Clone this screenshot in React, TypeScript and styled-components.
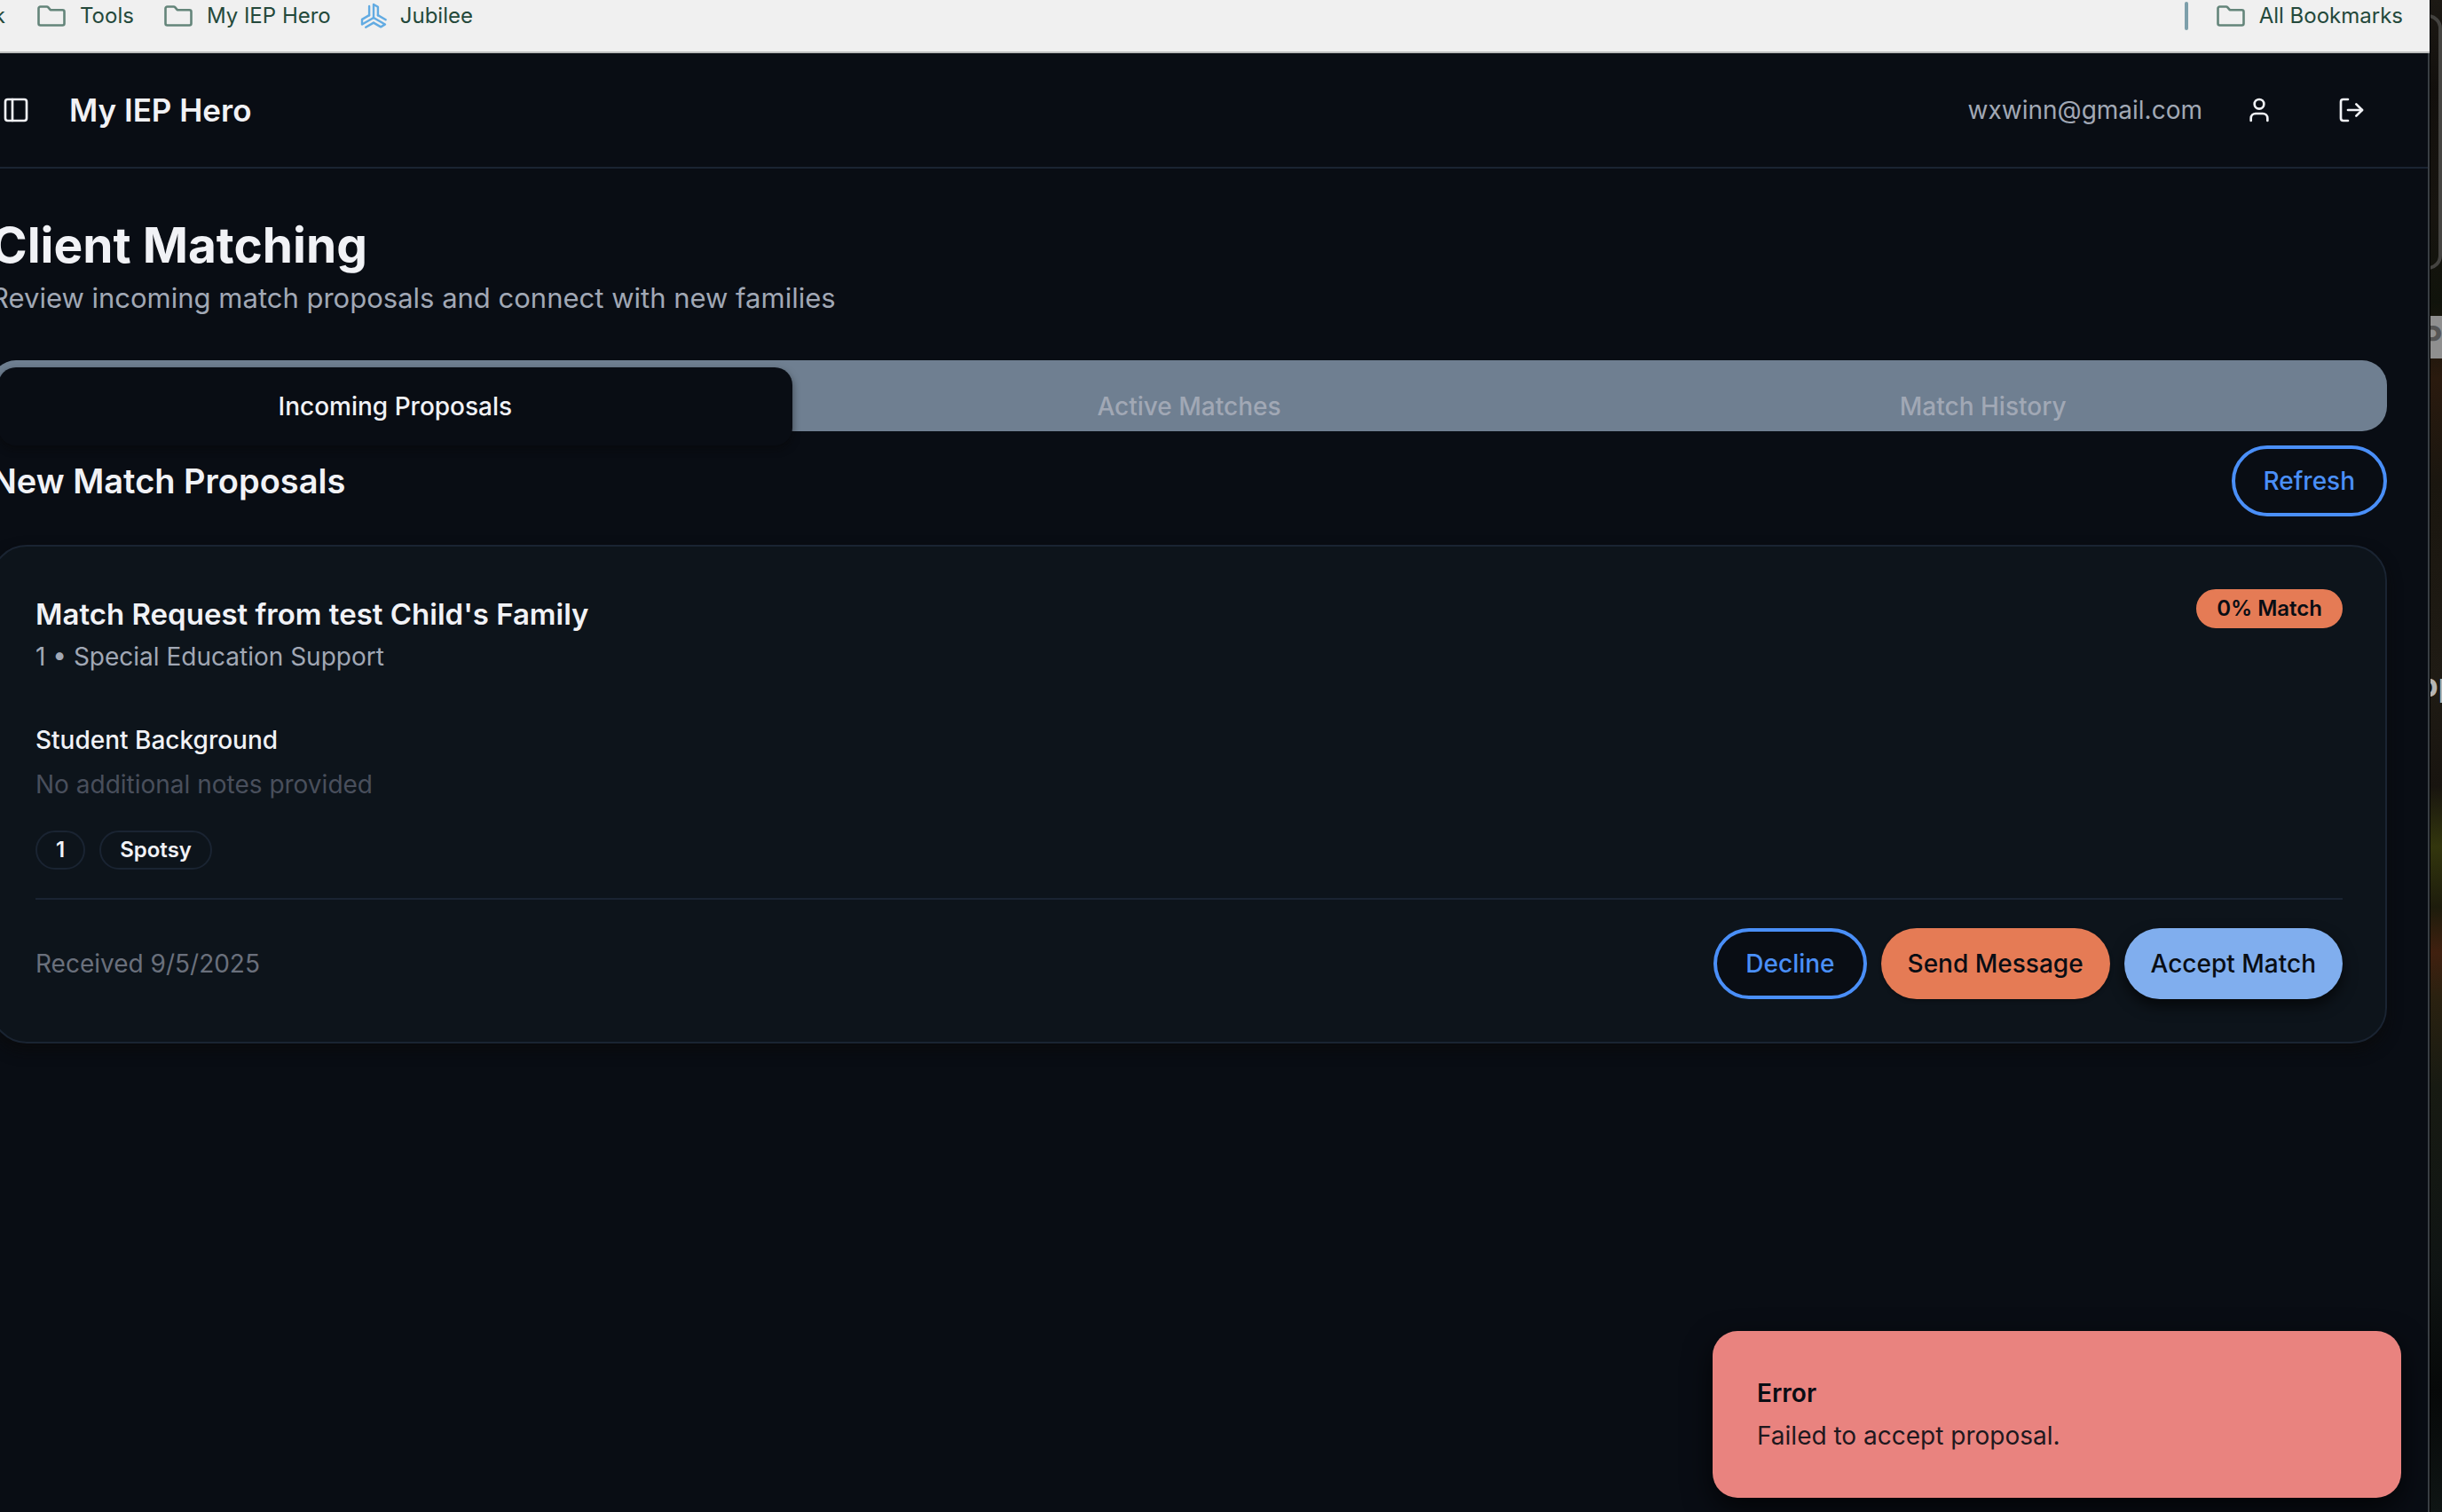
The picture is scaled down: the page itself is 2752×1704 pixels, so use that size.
import React from "react";
import styled, { createGlobalStyle, css } from "styled-components";
import { LogOut, PanelLeft, User } from "lucide-react";

const color = {
  page: "#090d14",
  card: "#0d141b",
  line: "#1a2432",
  text: "#f1f2f6",
  muted: "#a1a8b5",
  faint: "#6a707c",
  ghost: "#494f5c",
  slate: "#6f7f91",
  blue: "#4a8ff8",
  sky: "#80aeee",
  orange: "#e57b55",
  danger: "#e9837f",
  bookmark: "#24493b",
  folder: "#64857a",
};

const GlobalStyle = createGlobalStyle`
  *, *::before, *::after { box-sizing: border-box; }
  body {
    margin: 0;
    overflow: hidden;
    background: #000;
    font-family: Inter, "Liberation Sans", sans-serif;
    font-size: 28px;
    line-height: 40px;
  }
  h1, h2, h3, h4, p { margin: 0; }
  button { font: inherit; cursor: pointer; }
`;

const Screen = styled.div`
  display: grid;
  grid-template-columns: minmax(0, 1fr) 13px;
  column-gap: 1px;
  height: 100vh;
`;

const BrowserWindow = styled.div`
  position: relative;
  display: flex;
  flex-direction: column;
  min-width: 0;
  overflow: hidden;
`;

/* Bookmarks bar */

const BookmarksBar = styled.nav`
  display: flex;
  flex: none;
  align-items: flex-start;
  justify-content: space-between;
  height: 60px;
  padding-right: 30px;
  border-bottom: 2px solid #bcbdbd;
  background: #f0f0f0;
`;

const BookmarkGroup = styled.div<{ $gap: number }>`
  display: flex;
  align-items: center;
  gap: ${(p) => p.$gap}px;
  height: 36px;
`;

const Bookmark = styled.a<{ $clipped?: boolean }>`
  display: flex;
  align-items: center;
  gap: 16px;
  color: ${color.bookmark};
  font-size: 24px;
  line-height: 32px;
  text-decoration: none;
  white-space: nowrap;
  ${(p) =>
    p.$clipped &&
    css`
      justify-content: flex-end;
      width: 8px;
      padding-right: 2px;
    `}
`;

const BarDivider = styled.span`
  width: 4px;
  height: 32px;
  border-radius: 2px;
  background: #7d9faa;
`;

/* Application */

const AppFrame = styled.div`
  display: flex;
  flex: 1;
  flex-direction: column;
  min-height: 0;
  border-right: 2px solid #3a3f44;
  background: ${color.page};
  color: ${color.text};
`;

const Header = styled.header`
  display: flex;
  align-items: center;
  justify-content: space-between;
  height: 130px;
  padding-right: 46px;
  border-bottom: 2px solid ${color.line};
`;

const HeaderSide = styled.div<{ $gap: number }>`
  display: flex;
  align-items: center;
  gap: ${(p) => p.$gap}px;
`;

const IconButton = styled.button<{ $width: number }>`
  display: flex;
  align-items: center;
  justify-content: center;
  width: ${(p) => p.$width}px;
  height: 80px;
  padding: 0;
  border: 0;
  background: none;
  color: ${color.text};
`;

const Brand = styled.span`
  font-size: 35px;
  font-weight: 600;
`;

const Email = styled.span`
  color: ${color.muted};
`;

const Main = styled.main`
  margin-left: -10px;
  padding: 48px 46px 0 0;
`;

const PageTitle = styled.h1`
  font-size: 55px;
  font-weight: 700;
  line-height: 76px;
`;

const PageLead = styled.p`
  color: ${color.muted};
  font-size: 31px;
  line-height: 44px;
`;

const TabList = styled.div`
  display: grid;
  grid-template-columns: repeat(3, 1fr);
  height: 80px;
  margin-top: 48px;
  padding: 8px;
  border-radius: 28px;
  background: ${color.slate};
`;

const Tab = styled.button<{ $active?: boolean }>`
  height: 88px;
  border: 0;
  border-radius: 20px;
  background: none;
  color: ${color.muted};
  font-weight: 500;
  ${(p) =>
    p.$active &&
    css`
      background: ${color.page};
      color: ${color.text};
      box-shadow: 0 4px 8px rgba(8, 8, 8, 0.5);
    `}
`;

const SectionHead = styled.div`
  display: flex;
  align-items: center;
  justify-content: space-between;
  margin: 16px 0 32px;
`;

const SectionTitle = styled.h2`
  font-size: 38px;
  font-weight: 600;
`;

const PillButton = styled.button<{ $kind: "outline" | "orange" | "sky" }>`
  height: 80px;
  padding: 0 30px;
  border: 0;
  border-radius: 40px;
  color: ${color.page};
  font-weight: 500;
  white-space: nowrap;
  ${(p) =>
    p.$kind === "outline" &&
    css`
      padding: 0 32px;
      border: 4px solid ${color.blue};
      background: ${color.page};
      color: ${color.blue};
    `}
  ${(p) =>
    p.$kind === "orange" &&
    css`
      background: ${color.orange};
      box-shadow: 0 2px 4px rgba(0, 0, 0, 0.3);
    `}
  ${(p) =>
    p.$kind === "sky" &&
    css`
      background: ${color.sky};
      box-shadow: 0 8px 16px rgba(0, 0, 0, 0.6);
    `}
`;

const Card = styled.article`
  padding: 48px;
  border: 2px solid ${color.line};
  border-radius: 40px;
  background: ${color.card};
  box-shadow: 0 8px 16px rgba(10, 10, 10, 0.7);
`;

const CardHead = styled.div`
  display: flex;
  align-items: flex-start;
  justify-content: space-between;
  margin-bottom: 54px;
`;

const CardTitle = styled.h3`
  font-size: 33px;
  font-weight: 600;
  line-height: 56px;
`;

const CardMeta = styled.p`
  color: ${color.muted};
`;

const Badge = styled.span<{ $filled?: boolean }>`
  padding: 4px 21px;
  border: 2px solid ${(p) => (p.$filled ? color.orange : color.line)};
  border-radius: 22px;
  background: ${(p) => (p.$filled ? color.orange : "transparent")};
  color: ${(p) => (p.$filled ? color.page : color.text)};
  font-size: 24px;
  font-weight: 600;
  line-height: 32px;
`;

const BlockTitle = styled.h4`
  font-weight: 500;
`;

const Notes = styled.p`
  margin-top: 10px;
  color: ${color.ghost};
`;

const Chips = styled.div`
  display: flex;
  gap: 16px;
  margin: 32px 0;
`;

const CardFoot = styled.div`
  display: flex;
  align-items: center;
  justify-content: space-between;
  padding-top: 32px;
  border-top: 2px solid ${color.line};
`;

const Received = styled.span`
  color: ${color.faint};
`;

const Actions = styled.div`
  display: flex;
  gap: 16px;
`;

const Toast = styled.div`
  position: absolute;
  right: 32px;
  bottom: 16px;
  width: 776px;
  padding: 50px;
  border-radius: 28px;
  background: ${color.danger};
  color: ${color.page};
  box-shadow: 0 12px 32px rgba(0, 0, 0, 0.7);
`;

const ToastTitle = styled.p`
  font-weight: 600;
`;

const ToastText = styled.p`
  margin-top: 8px;
  opacity: 0.9;
`;

/* Strip of the desktop behind the window */

const Desktop = styled.aside`
  display: flex;
  flex-direction: column;
  overflow: hidden;
  background: linear-gradient(
    #1c1914 0%,
    #120f0c 6%,
    #17140f 14%,
    #10130b 20%,
    #2a1a0e 25%,
    #1a160f 32%,
    #1f1b14 45%,
    #18140f 52%,
    #33360d 56%,
    #1d1c0c 60%,
    #40200f 63%,
    #2a2110 66%,
    #171a12 72%,
    #0f1413 84%,
    #060808 92%,
    #0f1514 100%
  );
`;

const DesktopFrame = styled.div`
  height: 288px;
  margin: 16px 0 52px -32px;
  border: 4px solid #444340;
  border-radius: 16px;
`;

const DesktopLabel = styled.div<{ $band?: boolean }>`
  height: 48px;
  margin-bottom: 344px;
  background: ${(p) => (p.$band ? "#8f8f8f" : "none")};
  color: ${(p) => (p.$band ? "#555" : "#b5b5b5")};
  font-size: 36px;
  font-weight: 700;
  line-height: 48px;
  text-indent: ${(p) => (p.$band ? -10 : -14)}px;
  white-space: nowrap;
`;

function FolderIcon() {
  return (
    <svg width="32" height="24" viewBox="0 0 32 24" fill="none" aria-hidden="true">
      <path
        d="M1.5 3.5a2 2 0 0 1 2-2h7.2a2 2 0 0 1 1.5.7l2.6 3h13.7a2 2 0 0 1 2 2v13.3a2 2 0 0 1-2 2h-25a2 2 0 0 1-2-2z"
        stroke={color.folder}
        strokeWidth="2.6"
        strokeLinejoin="round"
      />
    </svg>
  );
}

const jubileeArm = "M0 0V-15L4.9 -12.2V-2.8M-4.9 -13V-2.8";

function JubileeIcon() {
  return (
    <svg width="28" height="28" viewBox="-14 -16 28 28" fill="none" overflow="visible" aria-hidden="true">
      <g stroke="#62abe2" strokeWidth="2.4" strokeLinejoin="round" strokeLinecap="round">
        <path d={jubileeArm} />
        <path d={jubileeArm} transform="rotate(120)" />
        <path d={jubileeArm} transform="rotate(240)" />
      </g>
    </svg>
  );
}

export default function App() {
  return (
    <>
      <GlobalStyle />
      <Screen>
        <BrowserWindow>
          <BookmarksBar aria-label="Bookmarks">
            <BookmarkGroup $gap={34}>
              <Bookmark href="#" $clipped>
                k
              </Bookmark>
              <Bookmark href="#tools">
                <FolderIcon />
                Tools
              </Bookmark>
              <Bookmark href="#my-iep-hero">
                <FolderIcon />
                My IEP Hero
              </Bookmark>
              <Bookmark href="#jubilee">
                <JubileeIcon />
                Jubilee
              </Bookmark>
            </BookmarkGroup>
            <BookmarkGroup $gap={32}>
              <BarDivider />
              <Bookmark href="#all">
                <FolderIcon />
                All Bookmarks
              </Bookmark>
            </BookmarkGroup>
          </BookmarksBar>

          <AppFrame>
            <Header>
              <HeaderSide $gap={42}>
                <IconButton $width={36} aria-label="Toggle sidebar">
                  <PanelLeft size={32} />
                </IconButton>
                <Brand>My IEP Hero</Brand>
              </HeaderSide>
              <HeaderSide $gap={24}>
                <Email>wxwinn@gmail.com</Email>
                <IconButton $width={80} aria-label="Profile">
                  <User size={32} />
                </IconButton>
                <IconButton $width={80} aria-label="Sign out">
                  <LogOut size={32} />
                </IconButton>
              </HeaderSide>
            </Header>

            <Main>
              <PageTitle>Client Matching</PageTitle>
              <PageLead>Review incoming match proposals and connect with new families</PageLead>

              <TabList role="tablist">
                <Tab role="tab" aria-selected="true" $active>
                  Incoming Proposals
                </Tab>
                <Tab role="tab" aria-selected="false">
                  Active Matches
                </Tab>
                <Tab role="tab" aria-selected="false">
                  Match History
                </Tab>
              </TabList>

              <SectionHead>
                <SectionTitle>New Match Proposals</SectionTitle>
                <PillButton $kind="outline">Refresh</PillButton>
              </SectionHead>

              <Card>
                <CardHead>
                  <div>
                    <CardTitle>Match Request from test Child's Family</CardTitle>
                    <CardMeta>1 • Special Education Support</CardMeta>
                  </div>
                  <Badge $filled>0% Match</Badge>
                </CardHead>
                <BlockTitle>Student Background</BlockTitle>
                <Notes>No additional notes provided</Notes>
                <Chips>
                  <Badge>1</Badge>
                  <Badge>Spotsy</Badge>
                </Chips>
                <CardFoot>
                  <Received>Received 9/5/2025</Received>
                  <Actions>
                    <PillButton $kind="outline">Decline</PillButton>
                    <PillButton $kind="orange">Send Message</PillButton>
                    <PillButton $kind="sky">Accept Match</PillButton>
                  </Actions>
                </CardFoot>
              </Card>
            </Main>
          </AppFrame>

          <Toast role="alert">
            <ToastTitle>Error</ToastTitle>
            <ToastText>Failed to accept proposal.</ToastText>
          </Toast>
        </BrowserWindow>

        <Desktop>
          <DesktopFrame />
          <DesktopLabel $band>P</DesktopLabel>
          <DesktopLabel>pp</DesktopLabel>
        </Desktop>
      </Screen>
    </>
  );
}
